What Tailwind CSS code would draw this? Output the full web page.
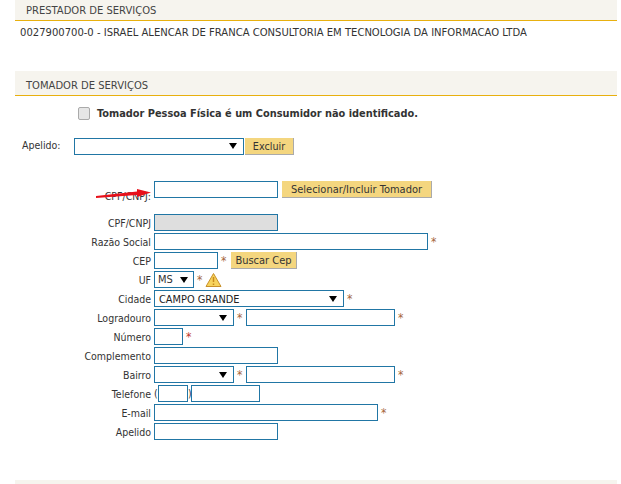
<!DOCTYPE html>
<html lang="en">

<head>
    <meta charset="UTF-8">
    <meta name="viewport" content="width=device-width, initial-scale=1.0">
    <title>Tomador de Serviços</title>
    <script src="https://cdn.jsdelivr.net/npm/@tailwindcss/browser@4"></script>
</head>

<body class="bg-white h-[484px] overflow-hidden font-['DejaVu_Sans_Condensed','DejaVu_Sans',sans-serif] [font-stretch:condensed] text-[11px] text-[#333]">
    <div class="relative ml-[15px] mr-[4px] h-[484px]">
        <!-- prestador -->
        <div class="h-[21px] pl-[11px] bg-[#f6f4ee] border-b border-[#e8b00f] text-[11.1px] text-[#444] leading-[21px]">PRESTADOR DE SERVIÇOS</div>
        <div class="pl-[5px] pt-[4px] h-[50px] leading-[16px] text-[11.15px] text-[#333]">0027900700-0 - ISRAEL ALENCAR DE FRANCA CONSULTORIA EM TECNOLOGIA DA INFORMACAO LTDA</div>

        <!-- tomador -->
        <div class="h-[25px] pl-[11px] bg-[#f6f4ee] border-b border-[#e8b00f] text-[11.1px] text-[#444] leading-[29px]">TOMADOR DE SERVIÇOS</div>

        <div class="flex items-center h-[19px] mt-[8px] pl-[63px]">
            <span class="w-[12px] h-[13px] rounded-[2px] border border-[#aaa] bg-[#e6e6e6]"></span>
            <span class="ml-[7px] pt-[2px] font-bold text-[#333] text-[10.9px]">Tomador Pessoa Física é um Consumidor não identificado.</span>
        </div>

        <div class="flex items-center h-[18px] mt-[14px] pl-[7px]">
            <span class="w-[52px] text-[10.5px]">Apelido:</span>
            <div class="w-[170px] h-[17px] border border-[#2176a5] flex items-center justify-end pr-[6px]">
                <span class="w-0 h-0 border-x-[4px] border-x-transparent border-t-[6px] border-t-black"></span>
            </div>
            <button class="ml-px h-[17px] w-[49px] pt-px bg-[#f4d67f] border-r border-b border-[#aaa] text-[10.7px] text-[#333] leading-[15px]">Excluir</button>
        </div>

        <!-- busca -->
        <div class="relative flex items-center h-[17px] mt-[26px]">
            <span class="w-[136px] pt-[14px] text-right text-[10.5px] text-[#333]">CPF/CNPJ:</span>
            <span class="ml-[3px] w-[124px] h-[17px] border border-[#2176a5]"></span>
            <button class="ml-[4px] h-[17px] w-[150px] pt-px bg-[#f4d67f] border-r border-b border-[#aaa] text-[#333] leading-[15px]">Selecionar/Incluir Tomador</button>
            <svg class="absolute left-[80px] top-[6px]" width="60" height="12" viewBox="0 0 60 12">
                <path d="M1 9 L42 4.5 L42 2 L56 5.5 L42 10 L42 8 L1 11 Z" fill="#e8101a" />
            </svg>
        </div>

        <!-- form -->
        <div class="mt-[15px] flex flex-col text-right text-[10.5px] text-[#333]">
            <div class="flex items-center h-[19px]">
                <span class="w-[136px] pt-[2px]">CPF/CNPJ</span>
                <span class="ml-[3px] w-[124px] h-[17px] border border-[#2176a5] bg-[#dedede]"></span>
            </div>
            <div class="flex items-center h-[19px]">
                <span class="w-[136px] pt-[2px]">Razão Social</span>
                <span class="ml-[3px] w-[274px] h-[17px] border border-[#2176a5]"></span>
                <span class="ml-[3px] text-[12px] text-[#a5643a]">*</span>
            </div>
            <div class="flex items-center h-[19px]">
                <span class="w-[136px] pt-[2px]">CEP</span>
                <span class="ml-[3px] w-[64px] h-[17px] border border-[#2176a5]"></span>
                <span class="ml-[3px] w-[10px] text-left text-[12px] text-[#a5643a]">*</span>
                <button class="h-[17px] w-[66px] pt-px bg-[#f4d67f] border-r border-b border-[#aaa] text-[11px] text-[#333] leading-[15px]">Buscar Cep</button>
            </div>
            <div class="flex items-center h-[19px]">
                <span class="w-[136px] pt-[2px]">UF</span>
                <div class="ml-[3px] w-[40px] h-[17px] border border-[#2176a5] flex items-center justify-between pl-[3px] pr-[5px]">
                    <span class="pt-[2px] text-[11px]">MS</span>
                    <span class="w-0 h-0 border-x-[4px] border-x-transparent border-t-[6px] border-t-black"></span>
                </div>
                <span class="ml-[3px] text-[12px] text-[#a5643a]">*</span>
                <svg class="ml-[3px]" width="17" height="16" viewBox="0 0 17 16">
                    <path d="M8.5 1.5 L16 14.5 H1 Z" fill="#f7d35c" stroke="#c8902a" stroke-linejoin="round" />
                    <path d="M8.5 5 V10 M8.5 11.5 V13" stroke="#c98a1c" stroke-width="1.5" />
                </svg>
            </div>
            <div class="flex items-center h-[19px]">
                <span class="w-[136px] pt-[2px]">Cidade</span>
                <div class="ml-[3px] w-[190px] h-[17px] border border-[#2176a5] flex items-center justify-between pl-[4px] pr-[6px]">
                    <span class="pt-[3px] text-[10.9px] text-[#222]">CAMPO GRANDE</span>
                    <span class="w-0 h-0 border-x-[4px] border-x-transparent border-t-[6px] border-t-black"></span>
                </div>
                <span class="ml-[3px] text-[12px] text-[#a5643a]">*</span>
            </div>
            <div class="flex items-center h-[19px]">
                <span class="w-[136px] pt-[2px]">Logradouro</span>
                <div class="ml-[3px] w-[80px] h-[17px] border border-[#2176a5] flex items-center justify-end pr-[6px]">
                    <span class="w-0 h-0 border-x-[4px] border-x-transparent border-t-[6px] border-t-black"></span>
                </div>
                <span class="ml-[3px] w-[9px] text-left text-[12px] text-[#a5643a]">*</span>
                <span class="w-[149px] h-[17px] border border-[#2176a5]"></span>
                <span class="ml-[3px] text-[12px] text-[#a5643a]">*</span>
            </div>
            <div class="flex items-center h-[19px]">
                <span class="w-[136px] pt-[2px]">Número</span>
                <span class="ml-[3px] w-[29px] h-[17px] border border-[#2176a5]"></span>
                <span class="ml-[3px] text-[12px] text-[#c0392b]">*</span>
            </div>
            <div class="flex items-center h-[19px]">
                <span class="w-[136px] pt-[2px]">Complemento</span>
                <span class="ml-[3px] w-[124px] h-[17px] border border-[#2176a5]"></span>
            </div>
            <div class="flex items-center h-[19px]">
                <span class="w-[136px] pt-[2px]">Bairro</span>
                <div class="ml-[3px] w-[80px] h-[17px] border border-[#2176a5] flex items-center justify-end pr-[6px]">
                    <span class="w-0 h-0 border-x-[4px] border-x-transparent border-t-[6px] border-t-black"></span>
                </div>
                <span class="ml-[3px] w-[9px] text-left text-[12px] text-[#a5643a]">*</span>
                <span class="w-[149px] h-[17px] border border-[#2176a5]"></span>
                <span class="ml-[3px] text-[12px] text-[#a5643a]">*</span>
            </div>
            <div class="flex items-center h-[19px]">
                <span class="w-[136px] pt-[2px]">Telefone</span>
                <span class="ml-[3px] w-[4px] text-left">(</span>
                <span class="w-[30px] h-[17px] border border-[#2176a5]"></span>
                <span class="w-[3px] text-left">)</span>
                <span class="w-[69px] h-[17px] border border-[#2176a5]"></span>
            </div>
            <div class="flex items-center h-[19px]">
                <span class="w-[136px] pt-[2px]">E-mail</span>
                <span class="ml-[3px] w-[224px] h-[17px] border border-[#2176a5]"></span>
                <span class="ml-[3px] text-[12px] text-[#a5643a]">*</span>
            </div>
            <div class="flex items-center h-[19px]">
                <span class="w-[136px] pt-[2px]">Apelido</span>
                <span class="ml-[3px] w-[124px] h-[17px] border border-[#2176a5]"></span>
            </div>
        </div>

        <div class="absolute left-0 right-0 top-[480px] h-[4px] bg-[#f6f4ee]"></div>
    </div>
</body>

</html>
